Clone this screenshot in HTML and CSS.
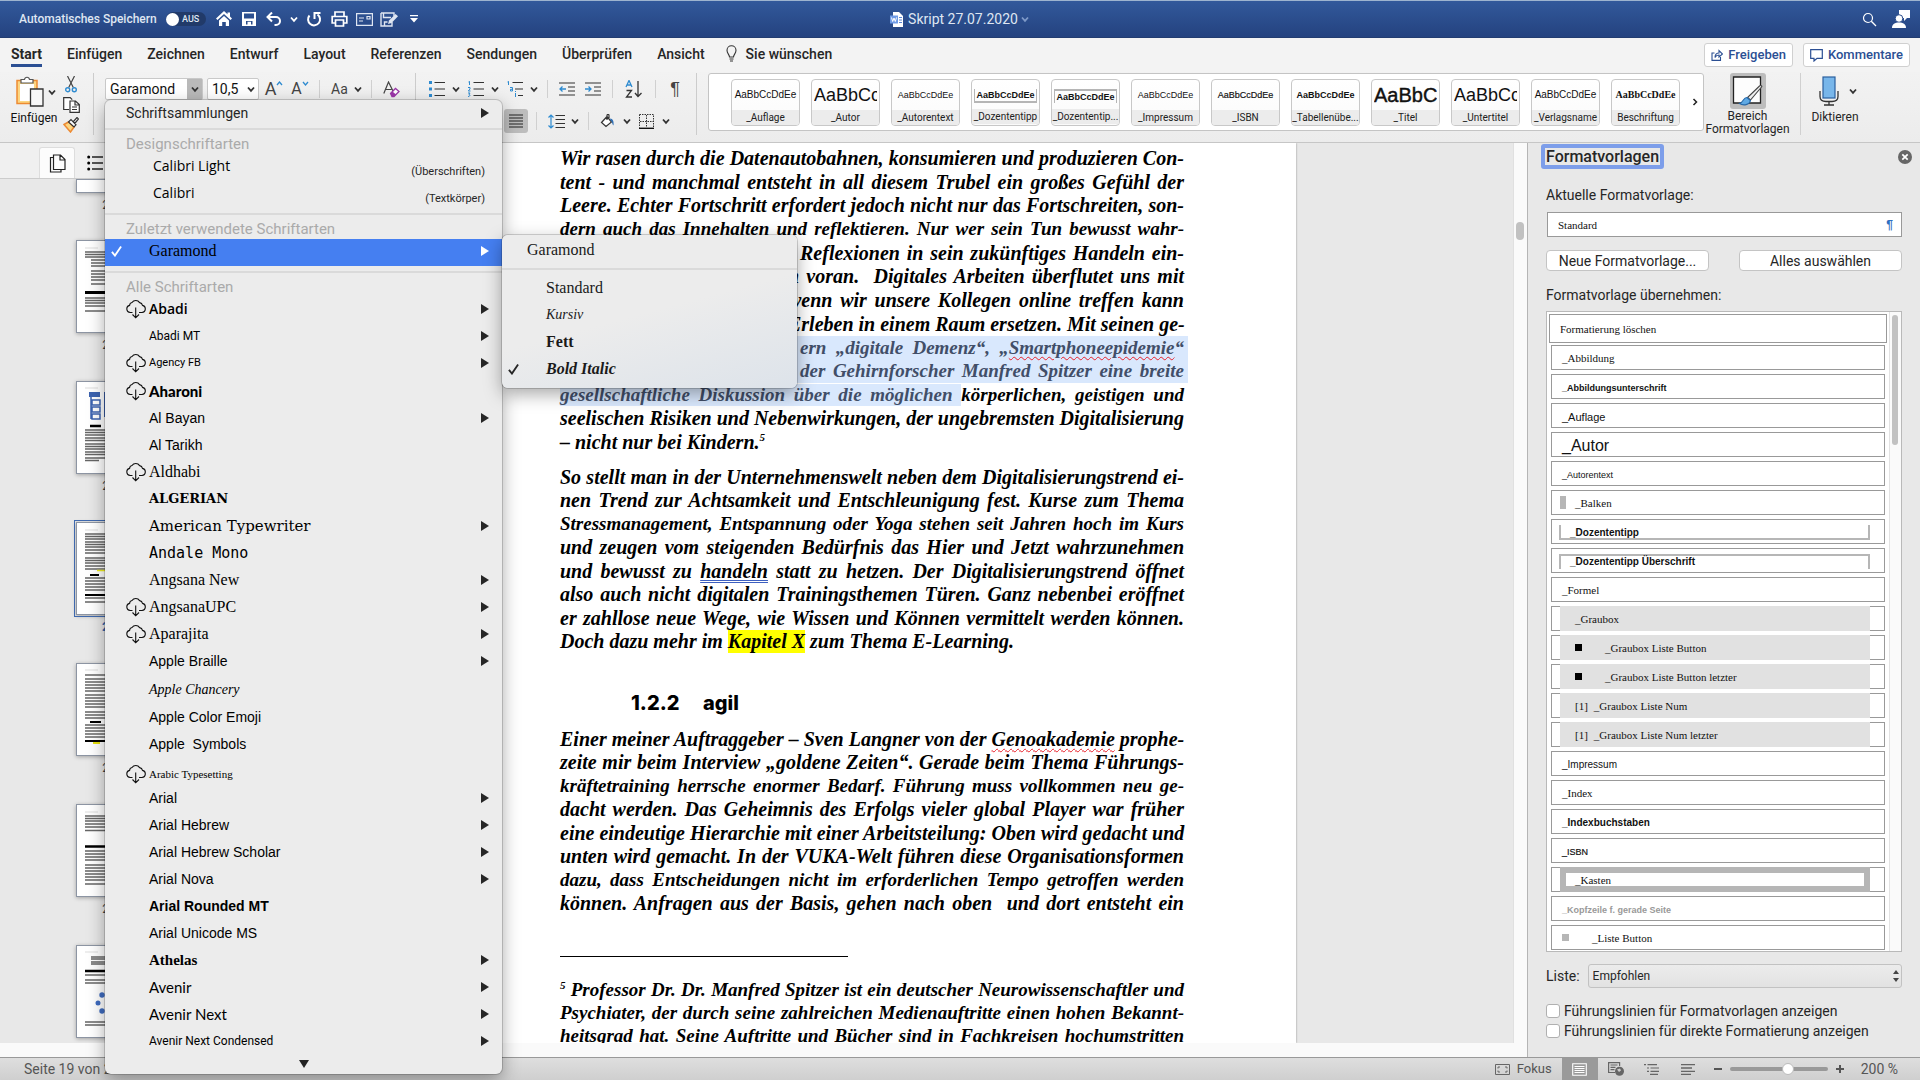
FILE: index.html
```html
<!DOCTYPE html>
<html lang="de">
<head>
<meta charset="utf-8">
<title>Skript 27.07.2020</title>
<link rel="stylesheet" href="styles.css">
</head>
<body>
<svg class="defs" aria-hidden="true">
  <symbol id="chev" viewBox="0 0 10 10"><path d="M2 3.5 5 6.8 8 3.5" fill="none" stroke="currentColor" stroke-width="1.8"/></symbol>
  <symbol id="cloud" viewBox="0 0 20 20"><path d="M6.500 13.500H4.200A3.600 3.600 0 0 1 3.600 6.400 3 3 0 0 1 6 3.500 4.500 4.500 0 0 1 13.600 3.600 3.500 3.500 0 0 1 16.500 6.400 3.600 3.600 0 0 1 16 13.500H13M9.700 8.500V18.500M6.500 15.500 9.700 18.800 13 15.500" fill="none" stroke="#111" stroke-width="1.1"/></symbol>
  <symbol id="tri" viewBox="0 0 8 10"><path d="M0 0 8 5 0 10z" fill="currentColor"/></symbol>
  <symbol id="check" viewBox="0 0 12 12"><path d="M1 7 4.300 11 11 1" fill="none" stroke="currentColor" stroke-width="2"/></symbol>
</svg>

<header class="titlebar">
  <div class="quick">
    <label class="autosave" for="auto">Automatisches Speichern</label>
    <span class="switch"><input id="auto" type="checkbox" role="switch"><span>AUS</span></span>
    <button class="tb" aria-label="Startseite"><svg width="16" height="16" viewBox="0 0 16 16"><path d="M8 0 0 7.500 1.500 9 8 3l6.500 6L16 7.500 14 5.600V1.500h-2.500v1.800z" fill="#fff"/><path d="M3 9.500 8 5l5 4.500V15H9.800v-4H6.200v4H3z" fill="#fff"/></svg></button>
    <button class="tb" aria-label="Speichern"><svg width="14" height="14" viewBox="0 0 14 14"><path d="M0 0h14v14H0zM2 1.500v5h10v-5zM4 9v3.500h1.500V9.800H9v2.700h1.500V9z" fill="#fff" fill-rule="evenodd"/></svg></button>
    <button class="tb" aria-label="Rückgängig"><svg width="16" height="14" viewBox="0 0 16 14"><path d="M6 0.500 1.500 5 6 9.500M2 5h8a4 4 0 0 1 0 8H8.500" fill="none" stroke="#fff" stroke-width="2"/></svg></button>
    <svg class="tbchev" width="10" height="10"><use href="#chev"/></svg>
    <button class="tb" aria-label="Wiederholen"><svg width="16" height="16" viewBox="0 0 16 16"><path d="M3.500 4.500a6 6 0 1 0 8-1M8.500 8V2h6" fill="none" stroke="#fff" stroke-width="2"/></svg></button>
    <button class="tb" aria-label="Drucken"><svg width="17" height="16" viewBox="0 0 17 16"><path d="M4 5V1h9v4M4 12H1.200V5.500h14.600V12H13M4.500 9h8v6h-8z" fill="none" stroke="#fff" stroke-width="1.700"/></svg></button>
    <button class="tb" aria-label="E-Mail"><svg width="17" height="13" viewBox="0 0 17 13"><path d="M.6.600h15.800v11.800H.6zM3 5h5M3 8h4M11 3.500h3v2.500h-3z" fill="none" stroke="#dfe6f2" stroke-width="1.200"/></svg></button>
    <button class="tb" aria-label="Speichern unter"><svg width="18" height="15" viewBox="0 0 18 15"><path d="M1 1h13v3M1 1v13h11v-4M3.500 1v4.500H11M4.500 14v-4h3" fill="none" stroke="#dfe6f2" stroke-width="1.400"/><path d="M8 12l1-3.500L15.500 2 18 4.300 11.500 11z" fill="#dfe6f2"/></svg></button>
    <button class="tb" aria-label="Anpassen"><svg width="8" height="8" viewBox="0 0 8 8"><path d="M0 0h8v1.200H0zM0 3h8L4 7.500z" fill="#fff"/></svg></button>
  </div>
  <div class="doctitle">
    <svg width="13" height="15" viewBox="0 0 13 15"><path d="M3 0h6l4 4v11H3z" fill="#fff"/><path d="M9 5.500h3M9 8h3M9 10.500h3" stroke="#5b86d6" stroke-width="1"/><path d="M0 3.500h8v8H0z" fill="#6f9be6"/><path d="M1.500 5.500 2.700 9.500 4 6l1.300 3.500L6.500 5.500" fill="none" stroke="#fff"/></svg>
    <span>Skript 27.07.2020</span>
    <svg class="dim" width="10" height="10"><use href="#chev"/></svg>
  </div>
  <div class="account">
    <button class="tb" aria-label="Suchen"><svg width="15" height="15" viewBox="0 0 15 15"><circle cx="6" cy="6" r="4.500" fill="none" stroke="#fff" stroke-width="1.200"/><path d="M9.300 9.300 14 14" stroke="#fff" stroke-width="1.300"/></svg></button>
    <button class="tb" aria-label="Konto"><svg width="18" height="18" viewBox="0 0 18 18"><path d="M7 0h11v8h-3l-3 3V8H7z" fill="#fff"/><circle cx="7" cy="8.500" r="3.800" fill="#fff" stroke="#2b4d8d"/><path d="M0 18c0-4 3-5.500 7-5.500s7 1.500 7 5.500z" fill="#fff"/></svg></button>
  </div>
</header>

<nav class="tabs">
  <a href="#" class="current">Start</a><a href="#">Einfügen</a><a href="#">Zeichnen</a><a href="#">Entwurf</a><a href="#">Layout</a><a href="#">Referenzen</a><a href="#">Sendungen</a><a href="#">Überprüfen</a><a href="#">Ansicht</a>
  <a href="#" class="tell"><svg width="11" height="17" viewBox="0 0 11 17"><path d="M3.500 12C3.500 9.500 1 8.500 1 5.300a4.500 4.500 0 0 1 9 0C10 8.500 7.500 9.500 7.500 12zM3.500 14h4M4 16h3" fill="none" stroke="#333" stroke-width="1.100"/></svg>Sie wünschen</a>
  <div class="share">
    <button><svg width="12" height="12" viewBox="0 0 12 12"><path d="M3.500 4H1v7.400h8.500V8M4 8.500c0-3 1.500-4.500 4-4.500V1.500L11.500 5 8 8V6C6 6 5 6.500 4 8.500z" fill="none" stroke="#2b4f93" stroke-width="1.100"/></svg>Freigeben</button>
    <button><svg width="13" height="13" viewBox="0 0 13 13"><path d="M.7.700h11.600v8.600H7L4 12V9.300H.7z" fill="none" stroke="#2b4f93" stroke-width="1.200"/></svg>Kommentare</button>
  </div>
</nav>

<section class="ribbon" aria-label="Start">
  <div class="clipboard">
    <button class="paste">
      <span><svg width="28" height="31" viewBox="0 0 28 31"><path d="M1 4.500h20v23H1z" fill="#fcd681" stroke="#ed8a33" stroke-width="1.500"/><path d="M4 8h14v17H4z" fill="#fff"/><path d="M5 7V3.500h3.500C9 .5 13 .5 13.500 3.500H17V7z" fill="#fff" stroke="#555" stroke-width="1.200"/><path d="M14.500 13h12.500v17H14.500z" fill="#f8f8f8" stroke="#333" stroke-width="1.300"/></svg><svg width="10" height="10"><use href="#chev"/></svg></span>
      Einfügen
    </button>
    <div class="clips">
      <button aria-label="Ausschneiden"><svg width="12" height="17" viewBox="0 0 12 17"><path d="M2.500 0 8.300 11.500M9.500 0 3.700 11.500" stroke="#444" stroke-width="1.200"/><circle cx="2.700" cy="13.700" r="2" fill="none" stroke="#2e8bd0" stroke-width="1.400"/><circle cx="9.300" cy="13.700" r="2" fill="none" stroke="#2e8bd0" stroke-width="1.400"/></svg></button>
      <button aria-label="Kopieren"><svg width="17" height="16" viewBox="0 0 17 16"><path d="M6 12.500H.7V.700h6.500l2 2M7 4h5.500l3.800 3.500V15.300H7zM12 4v4h4M9 10h5M9 12.500h5" fill="#fff" stroke="#333" stroke-width="1.200"/></svg></button>
      <button aria-label="Format übertragen"><svg width="16" height="16" viewBox="0 0 16 16"><path d="M1 7.500 5.500 5 11 10 7.500 15z" fill="#fcd681" stroke="#ed8a33" stroke-width="1.500"/><path d="M5.500 5 8 2.500 13 7.800 11 10zM10 5l4-4.500 1.500 1.500-3.800 4.500" fill="#fff" stroke="#333" stroke-width="1.200"/></svg></button>
    </div>
  </div>
  <div class="fonts">
    <div class="combo">
      <input class="fname" aria-label="Schriftart" value="Garamond"><button class="drop" aria-label="Schriftartenliste"><svg width="10" height="10"><use href="#chev"/></svg></button>
      <div class="menu" role="menu">
        <div class="item first">Schriftsammlungen<svg class="arrow"><use href="#tri"/></svg></div>
        <hr>
        <div class="head">Designschriftarten</div>
        <div class="item theme f-calibri"><span>Calibri Light</span><small>(Überschriften)</small></div>
        <div class="item theme f-calibri medium"><span>Calibri</span><small>(Textkörper)</small></div>
        <hr>
        <div class="head">Zuletzt verwendete Schriftarten</div>
        <div class="item active f-serif"><svg class="tick"><use href="#check"/></svg><span>Garamond</span><svg class="arrow"><use href="#tri"/></svg>
          <div class="submenu" role="menu">
            <div class="subtitle">Garamond</div>
            <hr>
            <div class="sub">Standard</div>
            <div class="sub f-chancery">Kursiv</div>
            <div class="sub bold">Fett</div>
            <div class="sub bold italic"><svg class="tick"><use href="#check"/></svg>Bold Italic</div>
          </div>
        </div>
        <hr>
        <div class="head">Alle Schriftarten</div>
        <div class="item f-open"><svg class="cloud"><use href="#cloud"/></svg><span>Abadi</span><svg class="arrow"><use href="#tri"/></svg></div>
        <div class="item f-narrow"><span>Abadi MT</span><svg class="arrow"><use href="#tri"/></svg></div>
        <div class="item f-agency"><svg class="cloud"><use href="#cloud"/></svg><span>Agency FB</span><svg class="arrow"><use href="#tri"/></svg></div>
        <div class="item f-black tall"><svg class="cloud"><use href="#cloud"/></svg><span>Aharoni</span></div>
        <div class="item f-arial"><span>Al Bayan</span><svg class="arrow"><use href="#tri"/></svg></div>
        <div class="item f-arial"><span>Al Tarikh</span></div>
        <div class="item f-serif"><svg class="cloud"><use href="#cloud"/></svg><span>Aldhabi</span></div>
        <div class="item f-algerian"><span>ALGERIAN</span></div>
        <div class="item f-slab"><span>American Typewriter</span><svg class="arrow"><use href="#tri"/></svg></div>
        <div class="item f-mono"><span>Andale Mono</span></div>
        <div class="item f-serif"><span>Angsana New</span><svg class="arrow"><use href="#tri"/></svg></div>
        <div class="item f-serif"><svg class="cloud"><use href="#cloud"/></svg><span>AngsanaUPC</span><svg class="arrow"><use href="#tri"/></svg></div>
        <div class="item f-serif"><svg class="cloud"><use href="#cloud"/></svg><span>Aparajita</span><svg class="arrow"><use href="#tri"/></svg></div>
        <div class="item f-arial"><span>Apple Braille</span><svg class="arrow"><use href="#tri"/></svg></div>
        <div class="item f-chancery taller"><span>Apple Chancery</span></div>
        <div class="item f-arial"><span>Apple Color Emoji</span></div>
        <div class="item f-arial"><span>Apple&nbsp; Symbols</span></div>
        <div class="item f-small"><svg class="cloud"><use href="#cloud"/></svg><span>Arabic Typesetting</span></div>
        <div class="item f-arial"><span>Arial</span><svg class="arrow"><use href="#tri"/></svg></div>
        <div class="item f-arial"><span>Arial Hebrew</span><svg class="arrow"><use href="#tri"/></svg></div>
        <div class="item f-arial"><span>Arial Hebrew Scholar</span><svg class="arrow"><use href="#tri"/></svg></div>
        <div class="item f-arial"><span>Arial Nova</span><svg class="arrow"><use href="#tri"/></svg></div>
        <div class="item f-arial bold"><span>Arial Rounded MT</span></div>
        <div class="item f-arial"><span>Arial Unicode MS</span></div>
        <div class="item f-athelas"><span>Athelas</span><svg class="arrow"><use href="#tri"/></svg></div>
        <div class="item f-avenir"><span>Avenir</span><svg class="arrow"><use href="#tri"/></svg></div>
        <div class="item f-avenir"><span>Avenir Next</span><svg class="arrow"><use href="#tri"/></svg></div>
        <div class="item f-narrow"><span>Avenir Next Condensed</span><svg class="arrow"><use href="#tri"/></svg></div>
        <div class="more"><svg width="10" height="8" viewBox="0 0 10 8"><path d="M0 0h10L5 8z" fill="#222"/></svg></div>
      </div>
    </div>
    <div class="combo size"><input class="fsize" aria-label="Schriftgrad" value="10,5"><button class="plain" aria-label="Schriftgrade"><svg width="10" height="10"><use href="#chev"/></svg></button></div>
    <button class="ic letter" aria-label="Schriftgrad vergrößern">A<svg width="7" height="5" viewBox="0 0 7 5"><path d="M1 4 3.500 1 6 4" fill="none" stroke="#2e8bd0" stroke-width="1.300"/></svg></button>
    <button class="ic letter small" aria-label="Schriftgrad verkleinern">A<svg width="7" height="5" viewBox="0 0 7 5"><path d="M1 1 3.500 4 6 1" fill="none" stroke="#2e8bd0" stroke-width="1.300"/></svg></button>
    <i class="bar"></i>
    <button class="split case">Aa<svg width="10" height="10"><use href="#chev"/></svg></button>
    <i class="bar"></i>
    <button class="ic" aria-label="Formatierung löschen"><svg width="17" height="17" viewBox="0 0 17 17"><path d="M.8 12.500 5.500 1 10 10M2.500 8.500h6" fill="none" stroke="#444" stroke-width="1.200"/><path d="M7.500 12.500 12.500 7.500 16 10.500 11 15.500H9z" fill="#fff" stroke="#9b36a8" stroke-width="1.300"/><path d="M7.500 12.500 9.500 10.500 13 13.500 11 15.500H9z" fill="#9b36a8"/></svg></button>
  </div>
  <div class="paragraph">
    <div class="row">
      <button class="split" aria-label="Aufzählung"><svg width="16" height="16" viewBox="0 0 16 16"><path d="M0 0h3v3H0zM0 6.500h3v3H0zM0 13h3v3H0z" fill="#2e8bd0"/><path d="M5.500 1.500H16M5.500 8H16M5.500 14.500H16" stroke="#333" stroke-width="1.200"/></svg><svg width="10" height="10"><use href="#chev"/></svg></button>
      <button class="split" aria-label="Nummerierung"><svg width="16" height="16" viewBox="0 0 16 16"><path d="M.5 1 1.500.300V4M0 6.500h2v1.500L.3 10h2.200M0 12h2l-1 1.500c1.500 0 1.300 2-1 2" fill="none" stroke="#2e8bd0"/><path d="M5.500 1.500H16M5.500 8H16M5.500 14.500H16" stroke="#333" stroke-width="1.200"/></svg><svg width="10" height="10"><use href="#chev"/></svg></button>
      <button class="split" aria-label="Liste mit mehreren Ebenen"><svg width="16" height="16" viewBox="0 0 16 16"><path d="M.5 1 1.500.300V4M3 6.500h2.500V10H3.500V8.300h2M8.500 12v4M8.500 10v1" fill="none" stroke="#2e8bd0"/><path d="M5.500 1.500H16M8 8h8M11 14.500h5" stroke="#333" stroke-width="1.200"/></svg><svg width="10" height="10"><use href="#chev"/></svg></button>
      <i class="bar"></i>
      <button class="ic" aria-label="Einzug verkleinern"><svg width="16" height="14" viewBox="0 0 16 14"><path d="M0 1h16M9 5h7M9 9h7M0 13h16" stroke="#333" stroke-width="1.200"/><path d="M7 7H1M3.500 4.500 1 7l2.500 2.500" fill="none" stroke="#2e8bd0" stroke-width="1.300"/></svg></button>
      <button class="ic" aria-label="Einzug vergrößern"><svg width="16" height="14" viewBox="0 0 16 14"><path d="M0 1h16M9 5h7M9 9h7M0 13h16" stroke="#333" stroke-width="1.200"/><path d="M0 7h6M3.500 4.500 6 7 3.500 9.500" fill="none" stroke="#2e8bd0" stroke-width="1.300"/></svg></button>
      <i class="bar"></i>
      <button class="ic wide" aria-label="Sortieren"><svg width="18" height="18" viewBox="0 0 18 18"><path d="M1 7 4 .500 7 7M2 5h4" fill="none" stroke="#2e8bd0" stroke-width="1.300"/><path d="M1.500 10.500h5l-5 6.500h5.500M13 1v15M10 13l3 3.500 3.500-3.500" fill="none" stroke="#333" stroke-width="1.300"/></svg></button>
      <i class="bar"></i>
      <button class="ic pilcrow" aria-label="Absatzmarken">¶</button>
    </div>
    <div class="row second">
      <button class="justify" aria-label="Blocksatz"><svg width="14" height="14" viewBox="0 0 14 14"><path d="M0 1h14M0 4h14M0 7h14M0 10h14M0 13h14" stroke="#222" stroke-width="1.100"/></svg></button>
      <i class="bar"></i>
      <button class="split" aria-label="Zeilenabstand"><svg width="17" height="15" viewBox="0 0 17 15"><path d="M3 1v13M.5 3.500 3 1l2.500 2.500M.5 11.500 3 14l2.500-2.500" fill="none" stroke="#2e8bd0" stroke-width="1.200"/><path d="M7.500 1.500H17M7.500 5.500H17M7.500 9.500H17M7.500 13.500H17" stroke="#333" stroke-width="1.200"/></svg><svg width="10" height="10"><use href="#chev"/></svg></button>
      <i class="bar"></i>
      <button class="split" aria-label="Schattierung"><svg width="15" height="15" viewBox="0 0 15 15"><path d="M1.500 8.500 7 2.500 11.500 8 6 12.500zM7 6V1.500c0-1.500 2-1.500 2 0V4" fill="#fff" stroke="#333" stroke-width="1.200"/><path d="M10 4.500c3 0 4 3 3.500 7-1.500-1-1-4-3-5z" fill="#2e6fb5"/></svg><svg width="10" height="10"><use href="#chev"/></svg></button>
      <button class="split" aria-label="Rahmen"><svg width="15" height="15" viewBox="0 0 15 15"><path d="M.5.500h14v13M.5.500v13M7.500 1v12M1 7.500h13" fill="none" stroke="#333" stroke-dasharray="1.500 1"/><path d="M0 14.300h15" stroke="#111" stroke-width="1.400"/></svg><svg width="10" height="10"><use href="#chev"/></svg></button>
    </div>
  </div>
  <div class="gallery">
    <button class="style"><span class="pv p10">AaBbCcDdEe</span><b>_Auflage</b></button>
    <button class="style"><span class="pv p18">AaBbCcDdEe</span><b>_Autor</b></button>
    <button class="style"><span class="pv p9">AaBbCcDdEe</span><b>_Autorentext</b></button>
    <button class="style"><span class="pv p9 bold tip">AaBbCcDdEe</span><b>_Dozententipp</b></button>
    <button class="style"><span class="pv p9 bold tiphead">AaBbCcDdEe</span><b>_Dozententip...</b></button>
    <button class="style"><span class="pv p9">AaBbCcDdEe</span><b>_Impressum</b></button>
    <button class="style"><span class="pv p9 dark">AaBbCcDdEe</span><b>_ISBN</b></button>
    <button class="style"><span class="pv p9 bold">AaBbCcDdEe</span><b>_Tabellenübe...</b></button>
    <button class="style"><span class="pv p20 dark">AaBbCcDdEe</span><b>_Titel</b></button>
    <button class="style"><span class="pv p18">AaBbCcDdEe</span><b>_Untertitel</b></button>
    <button class="style"><span class="pv p10">AaBbCcDdEe</span><b>_Verlagsname</b></button>
    <button class="style"><span class="pv serif bold">AaBbCcDdEe</span><b>Beschriftung</b></button>
    <button class="next" aria-label="Weitere Formatvorlagen"><svg width="6" height="8" viewBox="0 0 6 8"><path d="M1.500 1 4.500 4 1.500 7" fill="none" stroke="#222" stroke-width="1.500"/></svg></button>
  </div>
  <button class="big area"><span class="on"><svg width="32" height="32" viewBox="0 0 32 32"><path d="M1.500 2h27v26H1.500z" fill="#fdfdfd" stroke="#222" stroke-width="1.300"/><path d="M29.500 12 18.500 25l-3-2.500L27.500 11c1.500-1 3 0 2 1z" fill="#eee" stroke="#444" stroke-width="1.100"/><path d="M15 22.500c-4 0-3 4.500-7.500 6 4 2.500 10 1.500 11-3z" fill="#5fa9e4" stroke="#2567a8" stroke-width="1.100"/></svg></span>Bereich<br>Formatvorlagen</button>
  <button class="big dictate"><span><svg width="20" height="30" viewBox="0 0 20 30"><rect x="4" y="1" width="12" height="21" fill="#78b6ea" stroke="#2a5f9e" stroke-width="1.200"/><path d="M1 15v5.500c0 3.500 3 5 6 5h6c3 0 6-1.500 6-5V15M10 25.500V29M5 29h10" fill="none" stroke="#333" stroke-width="1.300"/></svg><svg width="10" height="10"><use href="#chev"/></svg></span>Diktieren</button>
</section>

<main class="work">
  <aside class="sidebar">
    <div class="sidetabs">
      <button class="on" aria-label="Miniaturansichten"><svg width="17" height="19" viewBox="0 0 17 19"><path d="M4.500 1h7L16 5.500v10H4.500zM11 1v5h5M4 3.500H1.500V18H12v-2" fill="none" stroke="#222" stroke-width="1.200"/></svg></button>
      <button aria-label="Navigation"><svg width="16" height="16" viewBox="0 0 16 16"><path d="M5 2h11M5 8h11M5 14h11" stroke="#222" stroke-width="1.300"/><circle cx="1.700" cy="2" r="1.500"/><circle cx="1.700" cy="8" r="1.500"/><circle cx="1.700" cy="14" r="1.500"/></svg></button>
    </div>
    <div class="thumbs">
      <figure class="cut"><div class="pg"></div><figcaption>20</figcaption></figure>
      <figure><div class="pg"><svg width="64" height="91"><path d="M8 7h13" stroke="#ddd"/><path d="M8 11h48M8 13.500h48M8 16h20M14 19h42M14 22h42M14 25h42M14 30h42M14 33h42M14 36h42M14 39h42M14 43h42M8 57h48M8 59.500h48M8 62h48M8 65h48M8 70h30" stroke="#666" stroke-width="1.400"/><path d="M8 51.500h30" stroke="#000" stroke-width="3"/></svg></div><figcaption>21</figcaption></figure>
      <figure><div class="pg"><svg width="64" height="91"><path d="M8 6h13" stroke="#ddd"/><path d="M12 10h11v5H12zM27 10h6v25h-6z" fill="#3c63b0"/><path d="M14 15v22M15 18h8v5h-8zM15 25h8v5h-8zM15 32h8v5h-8z" fill="none" stroke="#3c63b0" stroke-width="1.500"/><path d="M13 44h11" stroke="#000" stroke-width="2.500"/><path d="M8 48h48M8 50.500h48M8 53h48M8 56h48M8 58.500h20M8 62h48M8 64.500h48M8 67h48M8 70h48M8 72.500h48M8 76h48M8 78.500h14" stroke="#666" stroke-width="1.400"/></svg></div><figcaption>22</figcaption></figure>
      <figure class="sel"><div class="pg"><svg width="64" height="91"><path d="M8 7h13" stroke="#ddd"/><path d="M8 11h48M8 13.500h48M8 16h48M8 19h48M8 21.500h48M8 24h48M8 27h48M8 30h48M8 35h48M8 37.500h48M8 40h48M8 43h48M8 46h48M8 55h48M8 58h48M8 61h48M8 64h48M8 67h48M8 75h48M8 79h48" stroke="#666" stroke-width="1.400"/><path d="M20 47.500h10" stroke="#f0ee20" stroke-width="1.500"/><path d="M13 52h9M8 72h24" stroke="#000" stroke-width="2"/></svg></div><figcaption>23</figcaption></figure>
      <figure><div class="pg"><svg width="64" height="91"><path d="M8 6h13" stroke="#ddd"/><path d="M8 11h48M8 15h48M8 18h48M8 21h48M8 24h48M8 27h20M8 31h48M8 34h48M8 37h48M8 40h48M8 43h30M8 48h48M8 51h48M8 54h48M8 61h48M8 64h48M8 67h48M8 70h48M8 73h48" stroke="#666" stroke-width="1.400"/><path d="M13 58h11M8 77h48" stroke="#000" stroke-width="2"/><path d="M16 79h7" stroke="#e6e010" stroke-width="2"/></svg></div><figcaption>24</figcaption></figure>
      <figure><div class="pg"><svg width="64" height="91"><path d="M8 7h13" stroke="#ddd"/><path d="M8 11h48M8 13.500h48M8 16h48M8 19h48M8 22h48M8 25.500h48M8 46h48M8 49h48M8 52h48M8 55h48M8 60h48M8 63h48M8 66h48M8 69h48M8 72h48M8 75h48M8 79h48" stroke="#666" stroke-width="1.400"/><path d="M8 41.500h48" stroke="#000" stroke-width="2.500"/></svg></div><figcaption>25</figcaption></figure>
      <figure><div class="pg"><svg width="64" height="91"><path d="M8 6h13" stroke="#ddd"/><path d="M14 11h42M14 13h42M14 16h42M14 18h42M8 29h48M8 34h48M8 37h48M8 76h48M8 79h48" stroke="#666" stroke-width="1.400"/><path d="M8 25h48" stroke="#000" stroke-width="2.500"/><g fill="#3f6cc0"><circle cx="25" cy="49" r="2.700"/><circle cx="21" cy="57" r="2.500"/><circle cx="25" cy="65" r="2.700"/></g></svg></div></figure>
    </div>
  </aside>

  <article class="canvas">
    <div class="page">
      <p>
        <span>Wir rasen durch die Datenautobahnen, konsumieren und produzieren Con-</span>
        <span>tent - und manchmal entsteht in all diesem Trubel ein großes Gefühl der</span>
        <span>Leere. Echter Fortschritt erfordert jedoch nicht nur das Fortschreiten, son-</span>
        <span class="tight">dern auch das Innehalten und reflektieren. Nur wer sein Tun bewusst wahr-</span>
        <span class="rest">Reflexionen in sein zukünftiges Handeln ein-</span>
        <span class="rest tuck">h voran.&nbsp; Digitales Arbeiten überflutet uns mit</span>
        <span class="rest tuck">wenn wir unsere Kollegen online treffen kann</span>
        <span class="rest tuck">Erleben in einem Raum ersetzen. Mit seinen ge-</span>
        <span class="rest tight marked">ern „digitale Demenz“, „<u>Smartphoneepidemie</u>“</span>
        <span class="rest tight marked">der Gehirnforscher Manfred Spitzer eine breite</span>
        <span class="tight"><mark>gesellschaftliche Diskussion über die möglichen </mark>körperlichen, geistigen und</span>
        <span>seelischen Risiken und Nebenwirkungen, der ungebremsten Digitalisierung</span>
        <span class="end">– nicht nur bei Kindern.<sup>5</sup></span>
      </p>
      <p>
        <span>So stellt man in der Unternehmenswelt neben dem Digitalisierungstrend ei-</span>
        <span>nen Trend zur Achtsamkeit und Entschleunigung fest. Kurse zum Thema</span>
        <span class="tight">Stressmanagement, Entspannung oder Yoga stehen seit Jahren hoch im Kurs</span>
        <span>und zeugen vom steigenden Bedürfnis das Hier und Jetzt wahrzunehmen</span>
        <span>und bewusst zu <em>handeln</em> statt zu hetzen. Der Digitalisierungstrend öffnet</span>
        <span>also auch nicht digitalen Trainingsthemen Türen. Ganz nebenbei eröffnet</span>
        <span>er zahllose neue Wege, wie Wissen und Können vermittelt werden können.</span>
        <span class="end">Doch dazu mehr im <mark class="yellow">Kapitel X</mark> zum Thema E-Learning.</span>
      </p>
      <h2><span>1.2.2</span>agil</h2>
      <p>
        <span>Einer meiner Auftraggeber – Sven Langner von der <u>Genoakademie</u> prophe-</span>
        <span>zeite mir beim Interview „goldene Zeiten“. Gerade beim Thema Führungs-</span>
        <span class="tight">kräftetraining herrsche enormer Bedarf. Führung muss vollkommen neu ge-</span>
        <span>dacht werden. Das Geheimnis des Erfolgs vieler global Player war früher</span>
        <span>eine eindeutige Hierarchie mit einer Arbeitsteilung: Oben wird gedacht und</span>
        <span>unten wird gemacht. In der VUKA-Welt führen diese Organisationsformen</span>
        <span class="tight">dazu, dass Entscheidungen nicht im erforderlichen Tempo getroffen werden</span>
        <span>können. Anfragen aus der Basis, gehen nach oben&nbsp; und dort entsteht ein</span>
      </p>
      <footer class="notes">
        <span><sup>5</sup> Professor Dr. Dr. Manfred Spitzer ist ein deutscher Neurowissenschaftler und</span>
        <span>Psychiater, der durch seine zahlreichen Medienauftritte einen hohen Bekannt-</span>
        <span>heitsgrad hat. Seine Auftritte und Bücher sind in Fachkreisen hochumstritten</span>
      </footer>
    </div>
    <div class="scroll"><i></i></div>
  </article>

  <aside class="pane">
    <div class="panehead"><h1>Formatvorlagen</h1><button aria-label="Schließen"><svg width="14" height="14" viewBox="0 0 14 14"><circle cx="7" cy="7" r="7" fill="#666"/><path d="M4.300 4.300l5.400 5.400M9.700 4.300 4.300 9.700" stroke="#fff" stroke-width="1.700"/></svg></button></div>
    <h3>Aktuelle Formatvorlage:</h3>
    <div class="currentstyle"><span>Standard</span><b>¶</b></div>
    <div class="actions"><button>Neue Formatvorlage...</button><button>Alles auswählen</button></div>
    <h3 class="apply">Formatvorlage übernehmen:</h3>
    <div class="listbox">
      <ul>
        <li class="clear">Formatierung löschen</li>
        <li>_Abbildung</li>
        <li class="sans bold s9">_Abbildungsunterschrift</li>
        <li class="sans s11">_Auflage</li>
        <li class="sans s16">_Autor</li>
        <li class="sans s9">_Autorentext</li>
        <li class="inset balken">_Balken</li>
        <li class="sans bold s10 tipbox"><span>_Dozententipp</span></li>
        <li class="sans bold s10 tipbox top"><span>_Dozententipp Überschrift</span></li>
        <li>_Formel</li>
        <li class="inset"><span class="gray">_Graubox</span></li>
        <li class="inset"><span class="gray"><i class="sq"></i>_Graubox Liste Button</span></li>
        <li class="inset"><span class="gray"><i class="sq"></i>_Graubox Liste Button letzter</span></li>
        <li class="inset"><span class="gray"><i class="num">[1]</i>_Graubox Liste Num</span></li>
        <li class="inset"><span class="gray"><i class="num">[1]</i>_Graubox Liste Num letzter</span></li>
        <li class="sans s10">_Impressum</li>
        <li>_Index</li>
        <li class="sans bold s10">_Indexbuchstaben</li>
        <li class="sans s9 dark">_ISBN</li>
        <li class="inset"><span class="frame">_Kasten</span></li>
        <li class="sans bold s9 pale">_Kopfzeile f. gerade Seite</li>
        <li class="bullet"><i class="sq"></i>_Liste Button</li>
      </ul>
      <div class="listscroll"><i></i></div>
    </div>
    <div class="field"><label for="liste">Liste:</label><span class="select"><select id="liste"><option>Empfohlen</option></select><svg width="6" height="12" viewBox="0 0 6 12"><path d="M0 4 3 0l3 4zM0 8l3 4 3-4z" fill="#444"/></svg></span></div>
    <label class="tickbox"><input type="checkbox">Führungslinien für Formatvorlagen anzeigen</label>
    <label class="tickbox"><input type="checkbox">Führungslinien für direkte Formatierung anzeigen</label>
  </aside>
</main>

<footer class="status">
  <span class="pages">Seite 19 von 20</span>
  <button class="focus"><svg width="15" height="11" viewBox="0 0 15 11"><path d="M.5.500h14v10H.5z" fill="none" stroke="#666"/><path d="M3 4.500V3h2M10 3h2v1.500M12 6.500V8h-2M5 8H3V6.500" fill="none" stroke="#666"/></svg>Fokus</button>
  <button class="view on" aria-label="Drucklayout"><svg width="15" height="13" viewBox="0 0 15 13"><path d="M.7.700h13.600v11.600H.7zM2.500 3.500h10M2.500 5.500h10M2.500 7.500h10M2.500 9.500h10" fill="none" stroke="#fff" stroke-width="1.100"/></svg></button>
  <button class="view" aria-label="Weblayout"><svg width="16" height="14" viewBox="0 0 16 14"><path d="M7 10.500H.6V.600h11V4M2.500 3h7M2.500 5.300h5M2.500 7.700h4" fill="none" stroke="#666" stroke-width="1.200"/><circle cx="11.500" cy="9.300" r="4.500" fill="#666"/><path d="M9 7.500l3-1 1 2-2 1.500z" fill="#ccc"/></svg></button>
  <button class="view" aria-label="Gliederung"><svg width="15" height="11" viewBox="0 0 15 11"><path d="M0 .7h2M3.500.700H13M3 4h2M6.500 4H15M3 7.300h2M6.500 7.300H15M6 10.400h8" stroke="#666" stroke-width="1.200"/></svg></button>
  <button class="view" aria-label="Entwurf"><svg width="14" height="11" viewBox="0 0 14 11"><path d="M0 .7h14M0 4h11M0 7.300h14M0 10.400h10" stroke="#666" stroke-width="1.300"/></svg></button>
  <button class="zoom" aria-label="Verkleinern"><svg width="8" height="8"><path d="M0 4h8" stroke="#555" stroke-width="2"/></svg></button>
  <input type="range" aria-label="Zoom" min="0" max="100" value="61">
  <button class="zoom" aria-label="Vergrößern"><svg width="8" height="8"><path d="M0 4h8M4 0v8" stroke="#555" stroke-width="2"/></svg></button>
  <span class="percent">200 %</span>
</footer>
</body>
</html>
```
FILE: styles.css
```css
* { box-sizing: border-box; }
body {
  margin: 0;
  height: 100vh;
  overflow: hidden;
  display: grid;
  grid-template-rows: 38px 34px 71px minmax(0, 1fr) 23px;
  font: 14px/18px Roboto, "Liberation Sans", sans-serif;
  color: #262626;
  background: #f0f0f0;
}
button {
  font: inherit;
  color: inherit;
  background: none;
  border: 0;
  padding: 0;
  display: flex;
  align-items: center;
  justify-content: center;
}
.defs { position: absolute; width: 0; height: 0; }
svg { flex: none; display: block; }
.bold { font-weight: 700; }
.medium { font-weight: 500; }
.italic { font-style: italic; }

/* Title bar */
.titlebar {
  display: grid;
  grid-template-columns: 1fr auto 1fr;
  align-items: center;
  background: linear-gradient(#32599b, #24427f);
  border-top: 1px solid #9db4cf;
  border-bottom: 1px solid #223c70;
  color: #dfe6f2;
}
.quick { display: flex; align-items: center; gap: 11px; padding-left: 19px; }
.autosave { font-size: 12px; font-weight: 500; width: 136px; white-space: nowrap; }
.switch { display: flex; align-items: center; position: relative; width: 40px; height: 14px; border-radius: 7px; background: #213a69; }
.switch input { appearance: none; margin: 0; width: 13px; height: 13px; border-radius: 50%; background: #fff; }
.switch span { font-size: 9px; line-height: 14px; font-weight: 500; padding-left: 3px; }
.tb { width: 14px; }
.tbchev { color: #fff; margin: 0 -3px; }
.doctitle { display: flex; align-items: center; gap: 5px; font-size: 14px; }
.doctitle svg.dim { color: #7f9ac8; margin-left: -3px; }
.account { display: flex; justify-content: flex-end; gap: 18px; padding-right: 12px; }

/* Tabs */
.tabs { display: flex; align-items: center; gap: 25px; padding: 0 10px 0 11px; background: #f3f3f3; font-size: 14px; font-weight: 500; }
.tabs a { color: #262626; text-decoration: none; line-height: 20px; border-bottom: 3px solid transparent; white-space: nowrap; }
.tabs a.current { font-weight: 700; border-bottom-color: #2b4f93; }
.tabs a.tell { display: flex; gap: 9px; margin-left: -4px; align-items: center; }
.share { margin-left: auto; display: flex; gap: 10px; color: #2b4f93; font-size: 13px; }
.share button { height: 24px; gap: 5px; padding: 0 6px; background: #fff; border: 1px solid #d0d0d0; border-radius: 3px; }

/* Ribbon */
.ribbon { display: flex; background: linear-gradient(#f2f2f2, #ececec); border-bottom: 1px solid #c6c6c6; padding: 1px 0 0; font-size: 12px; line-height: 12px; }
.ribbon use { color: #333; }
.clipboard { display: flex; gap: 7px; width: 94px; padding-left: 12px; height: 62px; border-right: 1px solid #ccc; }
.paste { display: flex; flex-direction: column; justify-content: flex-start; gap: 5px; padding-top: 3px; width: 44px; color: #111; }
.paste span { display: flex; align-items: center; gap: 3px; margin-left: 5px; }
.clips { display: flex; flex-direction: column; justify-content: space-between; padding: 1px 0 0; }
.clips button { height: 20px; width: 16px; }
.fonts { display: flex; align-items: center; gap: 4px; padding-left: 11px; width: 321px; height: 32px; border: 0; }
.combo { position: relative; display: flex; height: 22px; width: 98px; background: #fff; border: 1px solid #c9c9c9; border-radius: 2px; }
.combo input { border: 0; background: none; outline: 0; font: 14px/20px Roboto, sans-serif; color: #111; padding: 0 4px; width: 100%; min-width: 0; }
.combo.size { width: 52px; }
.drop { width: 15px; flex: none; background: #b9b9b9; }
.plain { width: 15px; flex: none; }
.ic { width: 22px; height: 22px; flex: none; }
.ic.wide { width: 26px; }
.letter { font-size: 18px; align-items: flex-start; line-height: 22px; color: #444; }
.letter svg { margin-top: 3px; }
.letter.small { font-size: 16px; }
.pilcrow { font: 18px/22px "Liberation Sans", sans-serif; color: #444; }
.bar { width: 1px; height: 18px; margin: 0 4px; background: #d0d0d0; flex: none; }
.split { width: 35px; height: 22px; flex: none; justify-content: space-between; padding-left: 3px; }
.case { font-size: 14px; color: #444; }
.paragraph { width: 282px; height: 62px; border: solid #ccc; border-width: 0 1px; padding-left: 10px; flex: none; }
.row { height: 32px; display: flex; align-items: center; gap: 4px; }
.row.second { padding-left: 78px; }
.justify { width: 24px; height: 24px; background: #bdbdbd; border-radius: 3px; flex: none; }
.gallery { flex: 1; min-width: 0; margin: 0 0 0 11px; height: 58px; display: flex; align-items: center; gap: 11px; padding-left: 22px; background: #fff; border: 1px solid #c4c4c4; border-radius: 3px; overflow: hidden; }
.style { width: 69px; height: 47px; flex: none; flex-direction: column; align-items: stretch; border: 1px solid #c8c8c8; border-radius: 4px; overflow: hidden; background: linear-gradient(#fff, #fafafa); }
.style b { font: 10px/15px Roboto, sans-serif; white-space: nowrap; text-align: center; background: #ececec; color: #222; }
.pv { flex: 1; margin: 2px; display: flex; align-items: center; overflow: hidden; font-family: "Liberation Sans", sans-serif; color: #111; justify-content: center; min-height: 0; white-space: nowrap; }
.p9 { font-size: 9px; }
.p10 { font-size: 10px; }
.p18 { font-size: 18px; justify-content: flex-start; }
.p20 { font-size: 20px; justify-content: flex-start; }
.dark { -webkit-text-stroke: thin #111; }
.tip, .tiphead { flex: none; height: 14px; margin: 9px 2px 6px; border: solid #b5b5b5; border-width: 0 1px 2px; }
.tiphead { border-width: 2px 1px 0; }
.pv.serif { font-family: "Liberation Serif", serif; font-size: 10px; }
.next { margin-left: 1px; }
.big { flex-direction: column; justify-content: flex-start; width: 96px; height: 62px; flex: none; gap: 3px; }
.big span { display: flex; height: 35px; align-items: center; gap: 9px; }
.big.area { display: block; text-align: center; line-height: 13px; border-right: 1px solid #d0d0d0; margin-left: 1px; padding-right: 10px; }
.big.area .on { width: 36px; height: 36px; margin: 0 auto 1px; justify-content: center; background: #bdbdbd; border-radius: 3px; }
.big.dictate { width: 119px; padding-right: 51px; }
.big.dictate span { margin-left: 7px; }

/* Font menu */
.menu, .submenu { position: absolute; z-index: 5; background: #ececec; box-shadow: 0 0 0 1px rgba(0, 0, 0, .16), 0 6px 18px rgba(0, 0, 0, .35); border-radius: 6px; }
.menu { top: 21px; left: -1px; width: 397px; padding-top: 3px; color: #000; }
.menu hr { height: 2px; border: 0; background: #dadada; margin: 5px 0; }
.head { height: 19px; font-size: 15px; line-height: 18px; padding-left: 21px; color: #aaa; }
.item { height: 27px; display: flex; align-items: center; padding: 0 0 3px 44px; position: relative; }
.item.first { height: 20px; padding: 0 0 0 21px; font-size: 14px; color: #262626; }
.item.theme { padding-left: 48px; justify-content: space-between; padding-right: 17px; }
.item.theme small { font: 11px/16px Roboto, sans-serif; padding-top: 12px; color: #262626; }
.item.tall { height: 28px; }
.item.taller { height: 29px; padding-bottom: 1px; }
.arrow { position: absolute; right: 13px; width: 8px; height: 10px; color: #262626; }
.menu .arrow use, .menu .tick use { color: inherit; }
.cloud { width: 20px; height: 20px; position: absolute; left: 21px; }
.active { background: #457ff1; }
.active > .arrow, .active > .tick { color: #fff; }
.tick { position: absolute; left: 6px; width: 11px; height: 12px; }
.more { height: 18px; display: flex; justify-content: center; padding-top: 4px; }
.f-calibri { font-family: "Open Sans", sans-serif; font-size: 14px; }
.f-serif { font: 16px/20px "Liberation Serif", serif; }
.f-open { font: 600 14px/20px "Open Sans", sans-serif; }
.f-narrow { font-size: 12px; }
.f-agency { font-size: 11px; }
.f-black { font: 900 15px/20px Lato, sans-serif; }
.f-arial { font-family: "Liberation Sans", sans-serif; font-size: 14px; }
.f-algerian { font: 700 13px/20px "DejaVu Serif", serif; }
.f-slab { font: 15px/20px "DejaVu Serif", serif; }
.f-mono { font: 15px/20px "DejaVu Sans Mono", monospace; }
.f-chancery { font: italic 14px/20px "Liberation Serif", serif; }
.f-small { font: 11px/20px "Liberation Serif", serif; }
.item.f-small { padding: 2px 0 0 44px; }
.f-athelas { font: 700 15px/20px "Liberation Serif", serif; }
.f-avenir { font-family: Lato, sans-serif; font-size: 15px; }
.submenu { left: 397px; top: -4px; width: 295px; height: 153px; padding-top: 5px; background: linear-gradient(165deg, #ececec 50%, #dde3ea); color: #1a1a1a; }
.subtitle { height: 20px; line-height: 20px; padding-left: 25px; }
.submenu hr { margin: 8px 0 4px; }
.sub { height: 27px; line-height: 27px; padding-left: 44px; position: relative; }
.sub .tick { top: 8px; color: #262626; }

/* Workspace */
.work { display: grid; grid-template-columns: 300px minmax(0, 1fr) 393px; min-height: 0; }
.sidebar { background: #e8e8e8; min-height: 0; display: flex; flex-direction: column; border-bottom: 14px solid #fafafa; overflow: hidden; }
.sidetabs { flex: none; height: 36px; display: flex; align-items: flex-end; padding-left: 39px; background: #f0f0f0; border-bottom: 1px solid #ccc; }
.sidetabs button { width: 36px; height: 31px; }
.sidetabs .on { background: #fcfcfc; border: 1px solid #ddd; border-bottom: 0; border-radius: 3px 3px 0 0; }
.sidetabs button + button { width: 40px; }
.thumbs { flex: 1; min-height: 0; overflow: hidden; padding-left: 76px; }
.thumbs figure { margin: 0; width: 66px; height: 141px; }
.pg { height: 93px; background: #fff; border: 1px solid #8d95a3; box-shadow: 0 1px 4px rgba(0, 0, 0, .3); }
.cut { display: flex; flex-direction: column; justify-content: flex-end; }
.thumbs figure.cut { height: 61px; }
.cut .pg { height: 14px; flex: none; }
.cut figcaption { height: 48px; }
figcaption { text-align: center; font-size: 12px; line-height: 24px; color: #444; }
.sel .pg { outline: 1px solid #3f69ae; outline-offset: 1px; }
.sel figcaption { color: #3f69ae; font-weight: 700; }

.canvas { display: flex; background: #e8e8e8; min-height: 0; border-bottom: 14px solid #fafafa; overflow: hidden; }
.page { width: 896px; flex: none; margin-left: 100px; padding: 3px 112px 0 160px; background: #fff; box-shadow: 0 0 2px rgba(0, 0, 0, .4); font: italic 700 20px/24px "Liberation Serif", serif; color: #000; overflow: hidden; }
.page p { margin: 0 0 13px; }
.page p > span, .notes > span { display: block; white-space: nowrap; text-align: justify; text-align-last: justify; }
.page p + p > span:nth-child(even), .page h2 + p > span:nth-child(even) { line-height: 23px; }
.page p:first-child { margin-bottom: 11px; }
.page p:first-child > span:nth-child(3n) { line-height: 23px; }
.page p > span.end { text-align-last: left; }
.page p > span.tight { font-size: 19px; }
.page p > span.rest { padding-left: 240px; }
.page p > span.tuck { padding-left: 228px; }
.marked { background: #d9e8fd; color: #414e68; box-shadow: 4px 0 #d9e8fd; }
.page mark { background: #d9e8fd; color: #414e68; padding-bottom: 1px; }
.page mark.yellow { background: #ff0; color: #000; }
.page u { text-decoration: underline wavy #e8202a 1px; text-underline-offset: 2px; }
.page em { text-decoration: underline double #3d5fc0 1px; text-underline-offset: 2px; }
.page sup { font-size: 11px; line-height: 0; }
.page h2 { margin: 38px 0 12px; padding-left: 71px; font: 800 20px/24px Inter, "Liberation Sans", sans-serif; }
.page h2 span { display: inline-block; width: 72px; }
.notes { margin-top: 41px; font-size: 19px; line-height: 23px; }
.notes::before { content: ""; display: block; width: 288px; border-top: 1px solid #000; margin-bottom: 21px; }
.scroll { margin-left: auto; width: 14px; background: #fafafa; border-left: 1px solid #e0e0e0; padding: 79px 2px 0; }
.scroll i { display: block; height: 18px; width: 8px; border-radius: 4px; background: #c1c1c1; }

/* Styles pane */
.pane { background: #e8e8e8; border-left: 1px solid #b5b5b5; padding: 1px 18px 0; min-width: 0; }
.panehead { display: flex; justify-content: space-between; align-items: center; margin: 0 -10px 0 -5px; }
.panehead h1 { margin: 0; font-size: 16px; line-height: 17px; font-weight: 500; border: 4px solid #7d9eea; border-radius: 3px; padding: 0 1px; }
.pane h3 { margin: 17px 0 8px; font-size: 14px; line-height: 18px; font-weight: 400; }
.currentstyle { height: 25px; margin-left: 1px; padding: 0 8px 0 10px; display: flex; align-items: center; justify-content: space-between; background: #fff; border: 1px solid #999; font: 11px/16px "Liberation Serif", serif; color: #111; }
.currentstyle b { font: 700 12px/16px "Liberation Sans", sans-serif; color: #2f6ec0; }
.actions { display: flex; justify-content: space-between; margin-top: 13px; }
.actions button { width: 163px; height: 21px; background: #fff; border: 1px solid #c4c4c4; border-radius: 4px; }
.pane h3.apply { margin: 15px 0 7px; }
.listbox { display: flex; height: 641px; background: #fff; border: 1px solid #b9b9b9; }
.listbox ul { flex: 1; margin: 0; padding: 2px 2px 0; list-style: none; display: flex; flex-direction: column; gap: 4px; font: 11px/16px "Liberation Serif", serif; color: #111; }
.listbox li { height: 25px; margin: 0 2px; flex: none; display: flex; align-items: center; border: 1px solid #999; padding-left: 10px; }
.listbox li.clear { height: 29px; margin: 0 0 -2px; }
.listbox .sans { font-family: "Liberation Sans", sans-serif; padding-top: 3px; }
.s9 { font-size: 9px; }
.s10 { font-size: 10px; }
.s11 { font-size: 11px; }
.s16 { font-size: 16px; }
.listbox .pale { color: #999; }
.listbox li.inset { padding: 0 14px 0 8px; }
.gray, .frame { flex: 1; height: 25px; margin: -1px 0; display: flex; align-items: center; padding-left: 15px; background: #e1e1e1; }
.frame { background: #fff; border: 6px solid #b6b6b6; padding-left: 9px; }
.sq { width: 7px; height: 7px; background: #000; margin-right: 23px; }
.bullet .sq { background: #b6b6b6; }
.num { font-style: normal; margin-right: 6px; }
.balken::before { content: ""; width: 6px; height: 13px; background: #b6b6b6; margin-right: 9px; }
.listbox li.tipbox { padding: 5px 14px 3px 7px; align-items: stretch; }
.tipbox span { flex: 1; line-height: 15px; padding-left: 9px; border: solid #b6b6b6; border-width: 0 2px 2px; }
.tipbox.top span { border-width: 2px 2px 0; line-height: 12px; }
.listscroll { width: 12px; background: #fafafa; border-left: 1px solid #e2e2e2; padding: 3px 2px; }
.listscroll i { display: block; width: 6px; height: 130px; border-radius: 3px; background: #c1c1c1; }
.field { display: flex; align-items: center; gap: 8px; margin: 12px 0 13px; }
.select { flex: 1; display: flex; align-items: center; position: relative; }
.select select { appearance: none; width: 100%; height: 24px; padding: 0 4px; border: 1px solid #c2c2c2; border-radius: 3px; background: linear-gradient(#ececec, #e2e2e2); font: 12px/16px Roboto, sans-serif; color: #262626; }
.select svg { position: absolute; right: 3px; }
.tickbox { display: flex; align-items: center; gap: 4px; height: 20px; white-space: nowrap; }
.tickbox input { appearance: none; margin: 0; width: 14px; height: 14px; background: #fff; border: 1px solid #b0b0b0; border-radius: 3px; }

/* Status bar */
.status { display: flex; align-items: stretch; background: linear-gradient(#dedede, #cfcfcf); border-top: 1px solid #999; color: #555; line-height: 22px; padding-right: 22px; }
.pages { padding-left: 24px; flex: 1; }
.focus { gap: 7px; margin-right: 10px; font-size: 13px; }
.view { width: 36px; }
.view.on { background: #9a9a9a; }
.zoom { width: 24px; }
.status input { appearance: none; width: 98px; height: 4px; margin: auto 0; border-radius: 2px; background: #999; }
.status input::-webkit-slider-thumb { appearance: none; width: 12px; height: 12px; border-radius: 50%; background: #fff; border: 1px solid #bbb; }
.percent { padding-left: 9px; }
```
